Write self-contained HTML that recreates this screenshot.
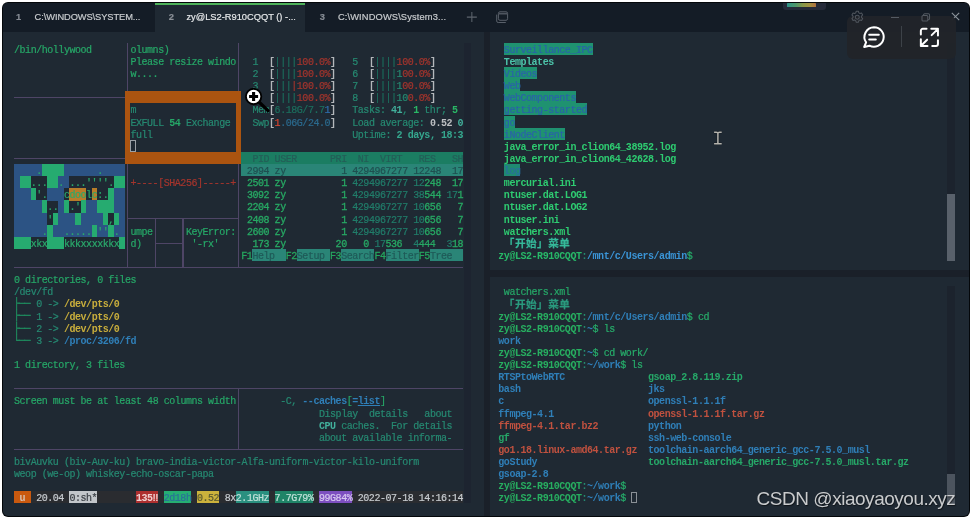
<!DOCTYPE html>
<html><head><meta charset="utf-8"><title>Terminal</title>
<style>
html,body{margin:0;padding:0;background:#fff;}
body{width:972px;height:520px;overflow:hidden;position:relative;}
#win{position:absolute;left:3px;top:3px;width:966px;height:513px;background:#1f2933;border-radius:5px;overflow:hidden;box-shadow:0 0 0 1px #04070a;}
#stage{position:absolute;left:-3px;top:-3px;width:972px;height:520px;filter:blur(0.45px);will-change:transform;}
.b{position:absolute;}
.t{-webkit-text-stroke:0.2px;position:absolute;font-family:"Liberation Mono","DejaVu Sans Mono",monospace;font-size:10.0px;line-height:12.125px;height:12.125px;letter-spacing:-0.455px;white-space:pre;}
.t.bx{font-family:"DejaVu Sans Mono","Liberation Mono",monospace;font-size:10.4px;letter-spacing:-0.716px;}
.t.dj{font-family:"Liberation Mono","DejaVu Sans Mono",monospace;}
.t.cj{font-family:"Liberation Mono","Noto Sans CJK SC",sans-serif;font-size:10.6px;letter-spacing:0.49px;font-weight:bold;}
.tab{position:absolute;top:2px;height:29.5px;font-family:"Liberation Sans",sans-serif;font-size:9.3px;line-height:30px;white-space:pre;}
.tab .n{position:absolute;font-weight:bold;color:#858b93;-webkit-text-stroke:0.2px;}
.tab .s{position:absolute;color:#c9cccf;-webkit-text-stroke:0.18px;}
</style></head><body>
<div id="win"><div id="stage">
<!-- title bar -->
<div class="b" style="left:0;top:0;width:972px;height:31.5px;background:#141c26"></div>
<div class="tab" style="left:2px;width:152.8px;"><span class="n" style="left:14px">1</span><span class="s" style="left:32.6px;letter-spacing:-0.085px">C:\WINDOWS\SYSTEM...</span></div>
<div class="tab" style="left:154.8px;width:150.4px;background:#1f2933;"><div class="b" style="left:0;top:0;width:150.4px;height:3.3px;background:#4eb25a"></div><span class="n" style="left:14px;color:#8b9198">2</span><span class="s" style="left:31.6px;color:#e6e8ea">zy@LS2-R910CQQT () -...</span></div>
<div class="tab" style="left:305.2px;width:150px;"><span class="n" style="left:14.5px">3</span><span class="s" style="left:32.7px;letter-spacing:0.14px">C:\WINDOWS\System3...</span></div>
<svg class="b" style="left:464px;top:9px" width="16" height="16" viewBox="0 0 16 16"><path d="M7.85 3.1v10M2.85 8.1h10" stroke="#5c636c" stroke-width="1.05" fill="none"/></svg>
<svg class="b" style="left:494px;top:9px" width="17" height="16" viewBox="0 0 17 16"><g fill="none" stroke="#59606a" stroke-width="1"><rect x="4.4" y="2.8" width="9.2" height="8.5" rx="1.6"/><path d="M4.6 4.700h8.800" stroke-width="1.600" stroke="#4e555f"/><path d="M2.700 5.600v6.400a1.500 1.500 0 0 0 1.500 1.500h7.600"/></g></svg>
<!-- top indicator -->
<div class="b" style="left:782.6px;top:0;width:43.6px;height:9.8px;background:#262b3a;border-radius:0 0 3px 3px"></div>
<div class="b" style="left:786.9px;top:3.2px;width:28.9px;height:3.6px;border-radius:0.5px;background:linear-gradient(90deg,#2fb8a4,#5cbc7c 30%,#a9bd4f 55%,#d0b544 78%,#e08842);opacity:.74"></div>
<!-- pane chrome -->
<div class="b" style="left:463.6px;top:42.8px;width:7.2px;height:460.3px;background:#1d2430"></div>
<div class="b" style="left:483.8px;top:31.5px;width:6.7px;height:486px;background:#1a2029"></div>
<div class="b" style="left:487px;top:270.2px;width:485px;height:7.2px;background:#1a2029"></div>
<div class="b" style="left:947px;top:43px;width:8px;height:218px;background:#1c232d"></div>
<div class="b" style="left:947.2px;top:194.3px;width:7.8px;height:66.7px;background:#59616b"></div>
<div class="b" style="left:947px;top:286px;width:8px;height:218.4px;background:#1c232d"></div>
<div class="b" style="left:947.2px;top:473.6px;width:7.8px;height:30.8px;background:#4c545e"></div>

<div class="b" style="left:14.00px;top:97.09px;width:110.90px;height:1.05px;background:#4e4566;"></div>
<div class="b" style="left:14.00px;top:157.71px;width:110.90px;height:1.05px;background:#4e4566;"></div>
<div class="b" style="left:14.00px;top:266.84px;width:449.14px;height:1.05px;background:#4e4566;"></div>
<div class="b" style="left:14.00px;top:388.09px;width:449.14px;height:1.05px;background:#4e4566;"></div>
<div class="b" style="left:14.00px;top:448.71px;width:449.14px;height:1.05px;background:#4e4566;"></div>
<div class="b" style="left:126.92px;top:42.75px;width:1.50px;height:48.50px;background:#4e4566;"></div>
<div class="b" style="left:237.82px;top:42.75px;width:1.50px;height:48.50px;background:#4e4566;"></div>
<div class="b" style="left:126.92px;top:164.00px;width:1.50px;height:103.06px;background:#4e4566;"></div>
<div class="b" style="left:237.82px;top:164.00px;width:1.50px;height:103.06px;background:#4e4566;"></div>
<div class="b" style="left:127.67px;top:218.34px;width:110.90px;height:1.05px;background:#4e4566;"></div>
<div class="b" style="left:154.65px;top:218.56px;width:1.50px;height:48.50px;background:#4e4566;"></div>
<div class="b" style="left:182.37px;top:218.56px;width:1.50px;height:48.50px;background:#4e4566;"></div>
<div class="b" style="left:155.40px;top:242.59px;width:27.73px;height:1.05px;background:#4e4566;"></div>
<div class="b" style="left:237.82px;top:388.31px;width:1.50px;height:60.62px;background:#4e4566;"></div>
<div class="b" style="left:124.90px;top:91.25px;width:116.44px;height:12.12px;background:#ab5410;"></div>
<div class="b" style="left:124.90px;top:151.88px;width:116.44px;height:12.12px;background:#ab5410;"></div>
<div class="b" style="left:124.90px;top:91.25px;width:5.54px;height:72.75px;background:#ab5410;"></div>
<div class="b" style="left:235.80px;top:91.25px;width:5.54px;height:72.75px;background:#ab5410;"></div>
<span class="t" style="left:14.00px;top:44.75px;color:#26a868;">/bin/hollywood</span>
<span class="t" style="left:130.44px;top:44.75px;color:#26a868;">olumns)</span>
<span class="t" style="left:130.44px;top:56.88px;color:#26a868;">Please resize windo</span>
<span class="t" style="left:130.44px;top:69.00px;color:#26a868;">w....</span>
<span class="t" style="left:130.44px;top:105.38px;color:#268a72;">m</span>
<span class="t" style="left:130.44px;top:117.50px;color:#268a72;">EXFULL </span>
<span class="t" style="left:169.26px;top:117.50px;color:#26a868;font-weight:bold;-webkit-text-stroke:0;">54</span>
<span class="t" style="left:180.35px;top:117.50px;color:#268a72;"> Exchange</span>
<span class="t" style="left:130.44px;top:129.62px;color:#268a72;">full</span>
<div class="b" style="left:130.75px;top:140.25px;width:3.54px;height:10.12px;border:1px solid #9aa0a6;box-sizing:content-box;margin:-0.5px"></div>
<div class="b" style="left:14.00px;top:164.00px;width:27.73px;height:12.28px;background:#2c5384;"></div>
<div class="b" style="left:41.73px;top:164.00px;width:22.18px;height:12.28px;background:#26ab70;"></div>
<div class="b" style="left:63.91px;top:164.00px;width:60.99px;height:12.28px;background:#2c5384;"></div>
<span class="t" style="left:36.18px;top:166.00px;color:#2aaa6c;">.</span>
<span class="t" style="left:97.17px;top:166.00px;color:#2aaa6c;">.</span>
<div class="b" style="left:14.00px;top:176.12px;width:5.54px;height:12.28px;background:#2c5384;"></div>
<div class="b" style="left:19.55px;top:176.12px;width:11.09px;height:12.28px;background:#26ab70;"></div>
<div class="b" style="left:47.27px;top:176.12px;width:11.09px;height:12.28px;background:#26ab70;"></div>
<div class="b" style="left:58.36px;top:176.12px;width:11.09px;height:12.28px;background:#2c5384;"></div>
<div class="b" style="left:113.81px;top:176.12px;width:11.09px;height:12.28px;background:#26ab70;"></div>
<span class="t" style="left:30.63px;top:178.12px;color:#2aaa6c;">...</span>
<span class="t" style="left:58.36px;top:178.12px;color:#2aaa6c;">.</span>
<span class="t" style="left:69.45px;top:178.12px;color:#2aaa6c;">...''''.</span>
<div class="b" style="left:14.00px;top:188.25px;width:16.63px;height:12.28px;background:#2c5384;"></div>
<div class="b" style="left:30.63px;top:188.25px;width:5.54px;height:12.28px;background:#26ab70;"></div>
<div class="b" style="left:47.27px;top:188.25px;width:16.63px;height:12.28px;background:#2c5384;"></div>
<div class="b" style="left:69.45px;top:188.25px;width:16.63px;height:12.28px;background:#b87c2a;"></div>
<div class="b" style="left:91.63px;top:188.25px;width:5.54px;height:12.28px;background:#b87c2a;"></div>
<div class="b" style="left:108.27px;top:188.25px;width:5.54px;height:12.28px;background:#26ab70;"></div>
<div class="b" style="left:113.81px;top:188.25px;width:11.09px;height:12.28px;background:#2c5384;"></div>
<span class="t" style="left:36.18px;top:190.25px;color:#2aaa6c;">'.</span>
<span class="t" style="left:63.91px;top:190.25px;color:#2aaa6c;">cdoolc:.</span>
<div class="b" style="left:14.00px;top:200.38px;width:27.73px;height:12.28px;background:#2c5384;"></div>
<div class="b" style="left:41.73px;top:200.38px;width:5.54px;height:12.28px;background:#26ab70;"></div>
<div class="b" style="left:58.36px;top:200.38px;width:5.54px;height:12.28px;background:#2c5384;"></div>
<div class="b" style="left:63.91px;top:200.38px;width:5.54px;height:12.28px;background:#26ab70;"></div>
<div class="b" style="left:80.54px;top:200.38px;width:5.54px;height:12.28px;background:#26ab70;"></div>
<div class="b" style="left:86.08px;top:200.38px;width:11.09px;height:12.28px;background:#2c5384;"></div>
<div class="b" style="left:97.17px;top:200.38px;width:16.63px;height:12.28px;background:#26ab70;"></div>
<div class="b" style="left:113.81px;top:200.38px;width:11.09px;height:12.28px;background:#2c5384;"></div>
<span class="t" style="left:47.27px;top:202.38px;color:#2aaa6c;">..</span>
<span class="t" style="left:69.45px;top:202.38px;color:#2aaa6c;">.'</span>
<div class="b" style="left:14.00px;top:212.50px;width:33.27px;height:12.28px;background:#2c5384;"></div>
<div class="b" style="left:52.81px;top:212.50px;width:5.54px;height:12.28px;background:#26ab70;"></div>
<div class="b" style="left:58.36px;top:212.50px;width:16.63px;height:12.28px;background:#2c5384;"></div>
<div class="b" style="left:75.00px;top:212.50px;width:5.54px;height:12.28px;background:#26ab70;"></div>
<div class="b" style="left:80.54px;top:212.50px;width:22.18px;height:12.28px;background:#2c5384;"></div>
<div class="b" style="left:102.72px;top:212.50px;width:5.54px;height:12.28px;background:#26ab70;"></div>
<div class="b" style="left:113.81px;top:212.50px;width:5.54px;height:12.28px;background:#26ab70;"></div>
<div class="b" style="left:119.36px;top:212.50px;width:5.54px;height:12.28px;background:#2c5384;"></div>
<span class="t" style="left:47.27px;top:214.50px;color:#2aaa6c;">'</span>
<span class="t" style="left:108.27px;top:214.50px;color:#2aaa6c;">,</span>
<div class="b" style="left:14.00px;top:224.62px;width:33.27px;height:12.28px;background:#2c5384;"></div>
<div class="b" style="left:47.27px;top:224.62px;width:5.54px;height:12.28px;background:#26ab70;"></div>
<div class="b" style="left:52.81px;top:224.62px;width:38.81px;height:12.28px;background:#2c5384;"></div>
<div class="b" style="left:91.63px;top:224.62px;width:5.54px;height:12.28px;background:#26ab70;"></div>
<div class="b" style="left:97.17px;top:224.62px;width:11.09px;height:12.28px;background:#2c5384;"></div>
<div class="b" style="left:108.27px;top:224.62px;width:5.54px;height:12.28px;background:#26ab70;"></div>
<div class="b" style="left:113.81px;top:224.62px;width:11.09px;height:12.28px;background:#2c5384;"></div>
<span class="t" style="left:41.73px;top:226.62px;color:#2aaa6c;">.</span>
<span class="t" style="left:63.91px;top:226.62px;color:#2aaa6c;">.....</span>
<span class="t" style="left:97.17px;top:226.62px;color:#2aaa6c;">''</span>
<span class="t" style="left:113.81px;top:226.62px;color:#2aaa6c;">.</span>
<div class="b" style="left:14.00px;top:236.75px;width:16.63px;height:12.28px;background:#26ab70;"></div>
<div class="b" style="left:47.27px;top:236.75px;width:16.63px;height:12.28px;background:#26ab70;"></div>
<div class="b" style="left:119.36px;top:236.75px;width:5.54px;height:12.28px;background:#26ab70;"></div>
<span class="t" style="left:30.63px;top:238.75px;color:#2aaa6c;">xkx</span>
<span class="t" style="left:63.91px;top:238.75px;color:#2aaa6c;">kkkxxxxkkx</span>
<span class="t" style="left:130.44px;top:178.12px;color:#a5352d;">+----[SHA256]-----+</span>
<span class="t" style="left:130.44px;top:226.62px;color:#26a868;">umpe</span>
<span class="t" style="left:130.44px;top:238.75px;color:#26a868;">d)</span>
<span class="t" style="left:185.90px;top:226.62px;color:#26a868;">KeyError:</span>
<span class="t" style="left:185.90px;top:238.75px;color:#26a868;"> '-rx'</span>
<span class="t" style="left:252.44px;top:56.88px;color:#268a72;">1</span>
<span class="t" style="left:269.07px;top:56.88px;color:#b4b8bc;font-weight:bold;-webkit-text-stroke:0;">[</span>
<span class="t" style="left:274.62px;top:56.88px;color:#1c6f5e;">||||</span>
<span class="t" style="left:296.80px;top:56.88px;color:#a5352d;">100.0%</span>
<span class="t" style="left:330.06px;top:56.88px;color:#b4b8bc;font-weight:bold;-webkit-text-stroke:0;">]</span>
<span class="t" style="left:252.44px;top:69.00px;color:#268a72;">2</span>
<span class="t" style="left:269.07px;top:69.00px;color:#b4b8bc;font-weight:bold;-webkit-text-stroke:0;">[</span>
<span class="t" style="left:274.62px;top:69.00px;color:#1c6f5e;">||||</span>
<span class="t" style="left:296.80px;top:69.00px;color:#a5352d;">100.0%</span>
<span class="t" style="left:330.06px;top:69.00px;color:#b4b8bc;font-weight:bold;-webkit-text-stroke:0;">]</span>
<span class="t" style="left:252.44px;top:81.12px;color:#268a72;">3</span>
<span class="t" style="left:269.07px;top:81.12px;color:#b4b8bc;font-weight:bold;-webkit-text-stroke:0;">[</span>
<span class="t" style="left:274.62px;top:81.12px;color:#1c6f5e;">|||</span>
<span class="t" style="left:291.25px;top:81.12px;color:#a5352d;">|</span>
<span class="t" style="left:296.80px;top:81.12px;color:#a5352d;">100.0%</span>
<span class="t" style="left:330.06px;top:81.12px;color:#b4b8bc;font-weight:bold;-webkit-text-stroke:0;">]</span>
<span class="t" style="left:252.44px;top:93.25px;color:#268a72;">4</span>
<span class="t" style="left:269.07px;top:93.25px;color:#b4b8bc;font-weight:bold;-webkit-text-stroke:0;">[</span>
<span class="t" style="left:274.62px;top:93.25px;color:#1c6f5e;">||||</span>
<span class="t" style="left:296.80px;top:93.25px;color:#a5352d;">100.0%</span>
<span class="t" style="left:330.06px;top:93.25px;color:#b4b8bc;font-weight:bold;-webkit-text-stroke:0;">]</span>
<span class="t" style="left:352.25px;top:56.88px;color:#268a72;">5</span>
<span class="t" style="left:368.88px;top:56.88px;color:#b4b8bc;font-weight:bold;-webkit-text-stroke:0;">[</span>
<span class="t" style="left:374.43px;top:56.88px;color:#1c6f5e;">||||</span>
<span class="t" style="left:396.61px;top:56.88px;color:#a5352d;">100.0%</span>
<span class="t" style="left:429.88px;top:56.88px;color:#b4b8bc;font-weight:bold;-webkit-text-stroke:0;">]</span>
<span class="t" style="left:352.25px;top:69.00px;color:#268a72;">6</span>
<span class="t" style="left:368.88px;top:69.00px;color:#b4b8bc;font-weight:bold;-webkit-text-stroke:0;">[</span>
<span class="t" style="left:374.43px;top:69.00px;color:#1c6f5e;">||||</span>
<span class="t" style="left:396.61px;top:69.00px;color:#268a72;">1</span>
<span class="t" style="left:402.15px;top:69.00px;color:#a5352d;">00.0%</span>
<span class="t" style="left:429.88px;top:69.00px;color:#b4b8bc;font-weight:bold;-webkit-text-stroke:0;">]</span>
<span class="t" style="left:352.25px;top:81.12px;color:#268a72;">7</span>
<span class="t" style="left:368.88px;top:81.12px;color:#b4b8bc;font-weight:bold;-webkit-text-stroke:0;">[</span>
<span class="t" style="left:374.43px;top:81.12px;color:#1c6f5e;">||||</span>
<span class="t" style="left:396.61px;top:81.12px;color:#268a72;">1</span>
<span class="t" style="left:402.15px;top:81.12px;color:#a5352d;">00.0%</span>
<span class="t" style="left:429.88px;top:81.12px;color:#b4b8bc;font-weight:bold;-webkit-text-stroke:0;">]</span>
<span class="t" style="left:352.25px;top:93.25px;color:#268a72;">8</span>
<span class="t" style="left:368.88px;top:93.25px;color:#b4b8bc;font-weight:bold;-webkit-text-stroke:0;">[</span>
<span class="t" style="left:374.43px;top:93.25px;color:#1c6f5e;">||||</span>
<span class="t" style="left:396.61px;top:93.25px;color:#268a72;">10</span>
<span class="t" style="left:407.69px;top:93.25px;color:#a5352d;">0.0%</span>
<span class="t" style="left:429.88px;top:93.25px;color:#b4b8bc;font-weight:bold;-webkit-text-stroke:0;">]</span>
<span class="t" style="left:252.44px;top:105.38px;color:#268a72;">Mem</span>
<span class="t" style="left:269.07px;top:105.38px;color:#b4b8bc;font-weight:bold;-webkit-text-stroke:0;">[</span>
<span class="t" style="left:274.62px;top:105.38px;color:#1c6f5e;">6.18G/7.7</span>
<span class="t" style="left:324.52px;top:105.38px;color:#2f6fae;">1</span>
<span class="t" style="left:330.06px;top:105.38px;color:#b4b8bc;font-weight:bold;-webkit-text-stroke:0;">]</span>
<span class="t" style="left:252.44px;top:117.50px;color:#268a72;">Swp</span>
<span class="t" style="left:269.07px;top:117.50px;color:#b4b8bc;font-weight:bold;-webkit-text-stroke:0;">[</span>
<span class="t" style="left:274.62px;top:117.50px;color:#d9442f;">1</span>
<span class="t" style="left:280.16px;top:117.50px;color:#2b6a8e;">.06G/24.0</span>
<span class="t" style="left:330.06px;top:117.50px;color:#b4b8bc;font-weight:bold;-webkit-text-stroke:0;">]</span>
<span class="t" style="left:352.25px;top:105.38px;color:#268a72;">Tasks: </span>
<span class="t" style="left:391.06px;top:105.38px;color:#42b09c;font-weight:bold;-webkit-text-stroke:0;">41</span>
<span class="t" style="left:402.15px;top:105.38px;color:#268a72;">, </span>
<span class="t" style="left:413.24px;top:105.38px;color:#29b765;font-weight:bold;-webkit-text-stroke:0;">1</span>
<span class="t" style="left:418.78px;top:105.38px;color:#268a72;"> thr; </span>
<span class="t" style="left:452.06px;top:105.38px;color:#29b765;font-weight:bold;-webkit-text-stroke:0;">5</span>
<span class="t" style="left:352.25px;top:117.50px;color:#268a72;">Load average: </span>
<span class="t" style="left:429.88px;top:117.50px;color:#bcbfc2;font-weight:bold;-webkit-text-stroke:0;">0.52</span>
<span class="t" style="left:452.06px;top:117.50px;color:#42b09c;font-weight:bold;-webkit-text-stroke:0;"> 0</span>
<span class="t" style="left:352.25px;top:129.62px;color:#268a72;">Uptime: </span>
<span class="t" style="left:396.61px;top:129.62px;color:#35a78e;font-weight:bold;-webkit-text-stroke:0;">2 days, 18:3</span>
<div class="b" style="left:241.34px;top:151.88px;width:221.80px;height:12.12px;background:#1b7d62;"></div>
<span class="t" style="left:241.34px;top:153.88px;color:#245e58;">  PID USER      PRI  NI  VIRT   RES   SH</span>
<div class="b" style="left:241.34px;top:164.00px;width:221.80px;height:12.12px;background:#2a8577;"></div>
<span class="t" style="left:241.34px;top:166.00px;color:#1f4f50;"> 2994 zy          1 4294967277 12248  17</span>
<span class="t" style="left:246.89px;top:178.12px;color:#27a964;-webkit-text-stroke:0.3px;">2501</span>
<span class="t" style="left:274.62px;top:178.12px;color:#27a964;-webkit-text-stroke:0.3px;">zy</span>
<span class="t" style="left:341.15px;top:178.12px;color:#27a964;-webkit-text-stroke:0.3px;">1</span>
<span class="t" style="left:352.25px;top:178.12px;color:#217d6a;">4294967277</span>
<span class="t" style="left:413.24px;top:178.12px;color:#217d6a;">12</span>
<span class="t" style="left:424.33px;top:178.12px;color:#27a964;-webkit-text-stroke:0.3px;">248</span>
<span class="t" style="left:452.06px;top:178.12px;color:#27a964;-webkit-text-stroke:0.3px;">17</span>
<span class="t" style="left:246.89px;top:190.25px;color:#27a964;-webkit-text-stroke:0.3px;">3092</span>
<span class="t" style="left:274.62px;top:190.25px;color:#27a964;-webkit-text-stroke:0.3px;">zy</span>
<span class="t" style="left:341.15px;top:190.25px;color:#27a964;-webkit-text-stroke:0.3px;">1</span>
<span class="t" style="left:352.25px;top:190.25px;color:#217d6a;">4294967277</span>
<span class="t" style="left:413.24px;top:190.25px;color:#217d6a;">38</span>
<span class="t" style="left:424.33px;top:190.25px;color:#27a964;-webkit-text-stroke:0.3px;">544</span>
<span class="t" style="left:446.51px;top:190.25px;color:#217d6a;">17</span>
<span class="t" style="left:457.60px;top:190.25px;color:#27a964;-webkit-text-stroke:0.3px;">1</span>
<span class="t" style="left:246.89px;top:202.38px;color:#27a964;-webkit-text-stroke:0.3px;">2204</span>
<span class="t" style="left:274.62px;top:202.38px;color:#27a964;-webkit-text-stroke:0.3px;">zy</span>
<span class="t" style="left:341.15px;top:202.38px;color:#27a964;-webkit-text-stroke:0.3px;">1</span>
<span class="t" style="left:352.25px;top:202.38px;color:#217d6a;">4294967277</span>
<span class="t" style="left:413.24px;top:202.38px;color:#217d6a;">10</span>
<span class="t" style="left:424.33px;top:202.38px;color:#27a964;-webkit-text-stroke:0.3px;">656</span>
<span class="t" style="left:457.60px;top:202.38px;color:#27a964;-webkit-text-stroke:0.3px;">7</span>
<span class="t" style="left:246.89px;top:214.50px;color:#27a964;-webkit-text-stroke:0.3px;">2408</span>
<span class="t" style="left:274.62px;top:214.50px;color:#27a964;-webkit-text-stroke:0.3px;">zy</span>
<span class="t" style="left:341.15px;top:214.50px;color:#27a964;-webkit-text-stroke:0.3px;">1</span>
<span class="t" style="left:352.25px;top:214.50px;color:#217d6a;">4294967277</span>
<span class="t" style="left:413.24px;top:214.50px;color:#217d6a;">10</span>
<span class="t" style="left:424.33px;top:214.50px;color:#27a964;-webkit-text-stroke:0.3px;">656</span>
<span class="t" style="left:457.60px;top:214.50px;color:#27a964;-webkit-text-stroke:0.3px;">7</span>
<span class="t" style="left:246.89px;top:226.62px;color:#27a964;-webkit-text-stroke:0.3px;">2600</span>
<span class="t" style="left:274.62px;top:226.62px;color:#27a964;-webkit-text-stroke:0.3px;">zy</span>
<span class="t" style="left:341.15px;top:226.62px;color:#27a964;-webkit-text-stroke:0.3px;">1</span>
<span class="t" style="left:352.25px;top:226.62px;color:#217d6a;">4294967277</span>
<span class="t" style="left:413.24px;top:226.62px;color:#217d6a;">10</span>
<span class="t" style="left:424.33px;top:226.62px;color:#27a964;-webkit-text-stroke:0.3px;">656</span>
<span class="t" style="left:457.60px;top:226.62px;color:#27a964;-webkit-text-stroke:0.3px;">7</span>
<span class="t" style="left:252.44px;top:238.75px;color:#27a964;-webkit-text-stroke:0.3px;">173</span>
<span class="t" style="left:274.62px;top:238.75px;color:#27a964;-webkit-text-stroke:0.3px;">zy</span>
<span class="t" style="left:335.61px;top:238.75px;color:#27a964;-webkit-text-stroke:0.3px;">20</span>
<span class="t" style="left:363.33px;top:238.75px;color:#27a964;-webkit-text-stroke:0.3px;">0</span>
<span class="t" style="left:374.43px;top:238.75px;color:#217d6a;">17</span>
<span class="t" style="left:385.51px;top:238.75px;color:#27a964;-webkit-text-stroke:0.3px;">536</span>
<span class="t" style="left:413.24px;top:238.75px;color:#217d6a;">4</span>
<span class="t" style="left:418.78px;top:238.75px;color:#27a964;">444</span>
<span class="t" style="left:446.51px;top:238.75px;color:#217d6a;">3</span>
<span class="t" style="left:452.06px;top:238.75px;color:#27a964;-webkit-text-stroke:0.3px;">18</span>
<span class="t" style="left:241.34px;top:250.88px;color:#25a55e;-webkit-text-stroke:0.3px;">F1</span>
<div class="b" style="left:252.44px;top:248.88px;width:33.27px;height:12.12px;background:#2a8577;"></div>
<span class="t" style="left:252.44px;top:250.88px;color:#1f5a58;">Help  </span>
<span class="t" style="left:285.70px;top:250.88px;color:#25a55e;-webkit-text-stroke:0.3px;">F2</span>
<div class="b" style="left:296.80px;top:248.88px;width:33.27px;height:12.12px;background:#2a8577;"></div>
<span class="t" style="left:296.80px;top:250.88px;color:#1f5a58;">Setup </span>
<span class="t" style="left:330.06px;top:250.88px;color:#25a55e;-webkit-text-stroke:0.3px;">F3</span>
<div class="b" style="left:341.15px;top:248.88px;width:33.27px;height:12.12px;background:#2a8577;"></div>
<span class="t" style="left:341.15px;top:250.88px;color:#1f5a58;">Search</span>
<span class="t" style="left:374.43px;top:250.88px;color:#25a55e;-webkit-text-stroke:0.3px;">F4</span>
<div class="b" style="left:385.51px;top:248.88px;width:33.27px;height:12.12px;background:#2a8577;"></div>
<span class="t" style="left:385.51px;top:250.88px;color:#1f5a58;">Filter</span>
<span class="t" style="left:418.78px;top:250.88px;color:#25a55e;-webkit-text-stroke:0.3px;">F5</span>
<div class="b" style="left:429.88px;top:248.88px;width:33.27px;height:12.12px;background:#2a8577;"></div>
<span class="t" style="left:429.88px;top:250.88px;color:#1f5a58;">Tree  </span>
<span class="t" style="left:14.00px;top:275.12px;color:#26a868;">0 directories, 0 files</span>
<span class="t" style="left:14.00px;top:287.25px;color:#268a72;">/dev/fd</span>
<span class="t bx" style="left:14.00px;top:299.38px;color:#1f8a5e;margin:-2.1px 0 0 -0.8px;-webkit-text-stroke:0.3px;">├── </span>
<span class="t" style="left:36.18px;top:299.38px;color:#268a72;">0 -&gt; </span>
<span class="t" style="left:63.91px;top:299.38px;color:#c9ae3c;font-weight:bold;-webkit-text-stroke:0;">/dev/pts/0</span>
<span class="t bx" style="left:14.00px;top:311.50px;color:#1f8a5e;margin:-2.1px 0 0 -0.8px;-webkit-text-stroke:0.3px;">├── </span>
<span class="t" style="left:36.18px;top:311.50px;color:#268a72;">1 -&gt; </span>
<span class="t" style="left:63.91px;top:311.50px;color:#c9ae3c;font-weight:bold;-webkit-text-stroke:0;">/dev/pts/0</span>
<span class="t bx" style="left:14.00px;top:323.62px;color:#1f8a5e;margin:-2.1px 0 0 -0.8px;-webkit-text-stroke:0.3px;">├── </span>
<span class="t" style="left:36.18px;top:323.62px;color:#268a72;">2 -&gt; </span>
<span class="t" style="left:63.91px;top:323.62px;color:#c9ae3c;font-weight:bold;-webkit-text-stroke:0;">/dev/pts/0</span>
<span class="t bx" style="left:14.00px;top:335.75px;color:#1f8a5e;margin:-2.1px 0 0 -0.8px;-webkit-text-stroke:0.3px;">└── </span>
<span class="t" style="left:36.18px;top:335.75px;color:#268a72;">3 -&gt; </span>
<span class="t" style="left:63.91px;top:335.75px;color:#2f7fb8;font-weight:bold;-webkit-text-stroke:0;">/proc/3206/fd</span>
<span class="t" style="left:14.00px;top:360.00px;color:#26a868;">1 directory, 3 files</span>
<span class="t" style="left:14.00px;top:396.38px;color:#26a868;">Screen must be at least 48 columns width</span>
<span class="t" style="left:280.16px;top:396.38px;color:#268a72;">-C, </span>
<span class="t" style="left:302.34px;top:396.38px;color:#2f7fb8;font-weight:bold;-webkit-text-stroke:0;">--caches</span>
<span class="t" style="left:346.70px;top:396.38px;color:#26a868;">[</span>
<span class="t" style="left:352.25px;top:396.38px;color:#2f7fb8;font-weight:bold;-webkit-text-stroke:0;">=</span>
<span class="t" style="left:357.79px;top:396.38px;color:#2f7fb8;font-weight:bold;-webkit-text-stroke:0;text-decoration:underline;">list</span>
<span class="t" style="left:379.97px;top:396.38px;color:#26a868;">]</span>
<span class="t" style="left:318.98px;top:408.50px;color:#268a72;">Display  details   about</span>
<span class="t" style="left:318.98px;top:420.62px;color:#42b09c;font-weight:bold;-webkit-text-stroke:0;">CPU</span>
<span class="t" style="left:335.61px;top:420.62px;color:#268a72;"> caches.  For details</span>
<span class="t" style="left:318.98px;top:432.75px;color:#268a72;">about available informa-</span>
<span class="t" style="left:14.00px;top:457.00px;color:#268a72;">bivAuvku (biv-Auv-ku) bravo-india-victor-Alfa-uniform-victor-kilo-uniform</span>
<span class="t" style="left:14.00px;top:469.12px;color:#268a72;">weop (we-op) whiskey-echo-oscar-papa</span>
<div class="b" style="left:14.00px;top:491.38px;width:449.14px;height:12.12px;background:#2a2c30;"></div>
<div class="b" style="left:14.00px;top:491.38px;width:16.63px;height:12.12px;background:#c9590f;"></div>
<span class="t" style="left:14.00px;top:493.38px;color:#d6bfae;font-weight:bold;-webkit-text-stroke:0;"> u </span>
<span class="t" style="left:36.18px;top:493.38px;color:#c8ccd0;">20.04</span>
<div class="b" style="left:69.45px;top:491.38px;width:27.73px;height:12.12px;background:#c2c6ca;"></div>
<span class="t" style="left:69.45px;top:493.38px;color:#3a3f45;">0:sh*</span>
<div class="b" style="left:135.99px;top:491.38px;width:22.18px;height:12.12px;background:#ad2f2f;"></div>
<span class="t dj" style="left:135.99px;top:493.38px;color:#f0d0d0;font-weight:bold;-webkit-text-stroke:0;">135‼</span>
<div class="b" style="left:163.72px;top:491.38px;width:27.73px;height:12.12px;background:#25ae73;"></div>
<span class="t" style="left:163.72px;top:493.38px;color:#2b6f9a;">2d18h</span>
<div class="b" style="left:196.98px;top:491.38px;width:22.18px;height:12.12px;background:#cbb23c;"></div>
<span class="t" style="left:196.98px;top:493.38px;color:#5a5a30;">0.52</span>
<span class="t" style="left:224.71px;top:493.38px;color:#c8ccd0;">8x</span>
<div class="b" style="left:235.80px;top:491.38px;width:33.27px;height:12.12px;background:#2a9080;"></div>
<span class="t" style="left:235.80px;top:493.38px;color:#bfe0d8;">2.1GHz</span>
<div class="b" style="left:274.62px;top:491.38px;width:38.81px;height:12.12px;background:#1f8467;"></div>
<span class="t" style="left:274.62px;top:493.38px;color:#bfe0d8;">7.7G79%</span>
<div class="b" style="left:318.98px;top:491.38px;width:33.27px;height:12.12px;background:#7d4fc0;"></div>
<span class="t" style="left:318.98px;top:493.38px;color:#d8c8f0;">99G84%</span>
<span class="t" style="left:357.79px;top:493.38px;color:#c8ccd0;">2022-07-18 14:16:14</span>
<div class="b" style="left:503.85px;top:42.75px;width:88.72px;height:12.12px;background:#1f9270;"></div>
<span class="t" style="left:503.85px;top:44.75px;color:#2a63a8;">Surveillance_IPC</span>
<span class="t" style="left:503.85px;top:56.88px;color:#4cc4aa;font-weight:bold;-webkit-text-stroke:0;">Templates</span>
<div class="b" style="left:503.85px;top:67.00px;width:33.27px;height:12.12px;background:#1f9270;"></div>
<span class="t" style="left:503.85px;top:69.00px;color:#2a63a8;">Videos</span>
<div class="b" style="left:503.85px;top:79.12px;width:16.63px;height:12.12px;background:#1f9270;"></div>
<span class="t" style="left:503.85px;top:81.12px;color:#2a63a8;">Web</span>
<div class="b" style="left:503.85px;top:91.25px;width:72.08px;height:12.12px;background:#1f9270;"></div>
<span class="t" style="left:503.85px;top:93.25px;color:#2a63a8;">WebComponents</span>
<div class="b" style="left:503.85px;top:103.38px;width:83.17px;height:12.12px;background:#1f9270;"></div>
<span class="t" style="left:503.85px;top:105.38px;color:#2a63a8;">getting-started</span>
<div class="b" style="left:503.85px;top:115.50px;width:11.09px;height:12.12px;background:#1f9270;"></div>
<span class="t" style="left:503.85px;top:117.50px;color:#2a63a8;">go</span>
<div class="b" style="left:503.85px;top:127.62px;width:60.99px;height:12.12px;background:#1f9270;"></div>
<span class="t" style="left:503.85px;top:129.62px;color:#2a63a8;">iNodeClient</span>
<span class="t" style="left:503.85px;top:141.75px;color:#2ecc71;font-weight:bold;-webkit-text-stroke:0;">java_error_in_clion64_38952.log</span>
<span class="t" style="left:503.85px;top:153.88px;color:#2ecc71;font-weight:bold;-webkit-text-stroke:0;">java_error_in_clion64_42628.log</span>
<div class="b" style="left:503.85px;top:164.00px;width:16.63px;height:12.12px;background:#1f8a72;"></div>
<span class="t" style="left:503.85px;top:166.00px;color:#2a6e9e;">log</span>
<span class="t" style="left:503.85px;top:178.12px;color:#2ecc71;font-weight:bold;-webkit-text-stroke:0;">mercurial.ini</span>
<span class="t" style="left:503.85px;top:190.25px;color:#2ecc71;font-weight:bold;-webkit-text-stroke:0;">ntuser.dat.LOG1</span>
<span class="t" style="left:503.85px;top:202.38px;color:#2ecc71;font-weight:bold;-webkit-text-stroke:0;">ntuser.dat.LOG2</span>
<span class="t" style="left:503.85px;top:214.50px;color:#2ecc71;font-weight:bold;-webkit-text-stroke:0;">ntuser.ini</span>
<span class="t" style="left:503.85px;top:226.62px;color:#2ecc71;font-weight:bold;-webkit-text-stroke:0;">watchers.xml</span>
<span class="t cj" style="left:503.85px;top:238.15px;color:#35b99a;">「开始」菜单</span>
<span class="t" style="left:498.30px;top:250.88px;color:#27b868;font-weight:bold;-webkit-text-stroke:0;">zy@LS2-R910CQQT</span>
<span class="t" style="left:581.48px;top:250.88px;color:#268a72;">:</span>
<span class="t" style="left:587.02px;top:250.88px;color:#3a94d6;font-weight:bold;-webkit-text-stroke:0;">/mnt/c/Users/admin</span>
<span class="t" style="left:686.83px;top:250.88px;color:#27ae6b;">$</span>
<span class="t" style="left:503.85px;top:287.25px;color:#26a868;">watchers.xml</span>
<span class="t cj" style="left:503.85px;top:298.77px;color:#2a9a7e;">「开始」菜单</span>
<span class="t" style="left:498.30px;top:311.50px;color:#27ae60;font-weight:bold;-webkit-text-stroke:0;">zy@LS2-R910CQQT</span>
<span class="t" style="left:581.48px;top:311.50px;color:#268a72;">:</span>
<span class="t" style="left:587.02px;top:311.50px;color:#2f7fb8;font-weight:bold;-webkit-text-stroke:0;">/mnt/c/Users/admin</span>
<span class="t" style="left:686.83px;top:311.50px;color:#27ae6b;">$ cd</span>
<span class="t" style="left:498.30px;top:323.62px;color:#27ae60;font-weight:bold;-webkit-text-stroke:0;">zy@LS2-R910CQQT</span>
<span class="t" style="left:581.48px;top:323.62px;color:#268a72;">:</span>
<span class="t" style="left:587.02px;top:323.62px;color:#2f7fb8;font-weight:bold;-webkit-text-stroke:0;">~</span>
<span class="t" style="left:592.57px;top:323.62px;color:#27ae6b;">$ ls</span>
<span class="t" style="left:498.30px;top:335.75px;color:#2f7fb8;font-weight:bold;-webkit-text-stroke:0;">work</span>
<span class="t" style="left:498.30px;top:347.88px;color:#27ae60;font-weight:bold;-webkit-text-stroke:0;">zy@LS2-R910CQQT</span>
<span class="t" style="left:581.48px;top:347.88px;color:#268a72;">:</span>
<span class="t" style="left:587.02px;top:347.88px;color:#2f7fb8;font-weight:bold;-webkit-text-stroke:0;">~</span>
<span class="t" style="left:592.57px;top:347.88px;color:#27ae6b;">$ cd work/</span>
<span class="t" style="left:498.30px;top:360.00px;color:#27ae60;font-weight:bold;-webkit-text-stroke:0;">zy@LS2-R910CQQT</span>
<span class="t" style="left:581.48px;top:360.00px;color:#268a72;">:</span>
<span class="t" style="left:587.02px;top:360.00px;color:#2f7fb8;font-weight:bold;-webkit-text-stroke:0;">~/work</span>
<span class="t" style="left:620.29px;top:360.00px;color:#27ae6b;">$ ls</span>
<span class="t" style="left:498.30px;top:372.12px;color:#2f7fb8;font-weight:bold;-webkit-text-stroke:0;">RTSPtoWebRTC</span>
<span class="t" style="left:648.01px;top:372.12px;color:#26a868;font-weight:bold;-webkit-text-stroke:0;">gsoap_2.8.119.zip</span>
<span class="t" style="left:498.30px;top:384.25px;color:#2f7fb8;font-weight:bold;-webkit-text-stroke:0;">bash</span>
<span class="t" style="left:648.01px;top:384.25px;color:#2f7fb8;font-weight:bold;-webkit-text-stroke:0;">jks</span>
<span class="t" style="left:498.30px;top:396.38px;color:#2f7fb8;font-weight:bold;-webkit-text-stroke:0;">c</span>
<span class="t" style="left:648.01px;top:396.38px;color:#2f7fb8;font-weight:bold;-webkit-text-stroke:0;">openssl-1.1.1f</span>
<span class="t" style="left:498.30px;top:408.50px;color:#2f7fb8;font-weight:bold;-webkit-text-stroke:0;">ffmpeg-4.1</span>
<span class="t" style="left:648.01px;top:408.50px;color:#c0513f;font-weight:bold;-webkit-text-stroke:0;">openssl-1.1.1f.tar.gz</span>
<span class="t" style="left:498.30px;top:420.62px;color:#c0513f;font-weight:bold;-webkit-text-stroke:0;">ffmpeg-4.1.tar.bz2</span>
<span class="t" style="left:648.01px;top:420.62px;color:#2f7fb8;font-weight:bold;-webkit-text-stroke:0;">python</span>
<span class="t" style="left:498.30px;top:432.75px;color:#26a868;font-weight:bold;-webkit-text-stroke:0;">gf</span>
<span class="t" style="left:648.01px;top:432.75px;color:#2f7fb8;font-weight:bold;-webkit-text-stroke:0;">ssh-web-console</span>
<span class="t" style="left:498.30px;top:444.88px;color:#c0513f;font-weight:bold;-webkit-text-stroke:0;">go1.18.linux-amd64.tar.gz</span>
<span class="t" style="left:648.01px;top:444.88px;color:#2f7fb8;font-weight:bold;-webkit-text-stroke:0;">toolchain-aarch64_generic_gcc-7.5.0_musl</span>
<span class="t" style="left:498.30px;top:457.00px;color:#2f7fb8;font-weight:bold;-webkit-text-stroke:0;">goStudy</span>
<span class="t" style="left:648.01px;top:457.00px;color:#26a868;font-weight:bold;-webkit-text-stroke:0;">toolchain-aarch64_generic_gcc-7.5.0_musl.tar.gz</span>
<span class="t" style="left:498.30px;top:469.12px;color:#2f7fb8;font-weight:bold;-webkit-text-stroke:0;">gsoap-2.8</span>
<span class="t" style="left:498.30px;top:481.25px;color:#27ae60;font-weight:bold;-webkit-text-stroke:0;">zy@LS2-R910CQQT</span>
<span class="t" style="left:581.48px;top:481.25px;color:#268a72;">:</span>
<span class="t" style="left:587.02px;top:481.25px;color:#2f7fb8;font-weight:bold;-webkit-text-stroke:0;">~/work</span>
<span class="t" style="left:620.29px;top:481.25px;color:#27ae6b;">$</span>
<span class="t" style="left:498.30px;top:493.38px;color:#27ae60;font-weight:bold;-webkit-text-stroke:0;">zy@LS2-R910CQQT</span>
<span class="t" style="left:581.48px;top:493.38px;color:#268a72;">:</span>
<span class="t" style="left:587.02px;top:493.38px;color:#2f7fb8;font-weight:bold;-webkit-text-stroke:0;">~/work</span>
<span class="t" style="left:620.29px;top:493.38px;color:#27ae6b;">$</span>
<div class="b" style="left:631.88px;top:492.18px;width:3.94px;height:9.53px;border:1px solid #8a9096;box-sizing:content-box;margin:-0.5px"></div>

<!-- mouse cursors -->
<svg class="b" style="left:240px;top:84px" width="34" height="32" viewBox="0 0 34 32"><path d="M19 18l9 8.6" stroke="#000" stroke-width="3.2" stroke-linecap="round"/><circle cx="13.6" cy="12.5" r="7.7" fill="#fff" stroke="#000" stroke-width="1.9"/><path d="M13.6 8v9M9.1 12.5h9" stroke="#000" stroke-width="3.1"/></svg>
<svg class="b" style="left:711px;top:129px" width="14" height="18" viewBox="0 0 14 18"><path d="M3.100 3.200h2.200q1.600 0 1.600 1.100v9.400q0 1.100-1.600 1.100H3.100M10.700 3.200H8.500q-1.600 0-1.600 1.100M10.700 14.800H8.500q-1.600 0-1.600-1.100" fill="none" stroke="#0e1319" stroke-opacity=".6" stroke-width="2.600"/><path d="M3.100 3.200h2.200q1.600 0 1.600 1.100v9.400q0 1.100-1.600 1.100H3.100M10.700 3.200H8.500q-1.600 0-1.600 1.100M10.700 14.800H8.500q-1.600 0-1.600-1.100" fill="none" stroke="#b4b3ad" stroke-width="1.500"/></svg>

<!-- floating toolbar -->
<svg class="b" style="left:948.15px;top:9.2px" width="15" height="15" viewBox="0 0 15 15"><path d="M3.8 3.8l7.4 7.4M11.2 3.8l-7.4 7.4" stroke="#8d949b" stroke-width="1.1" fill="none"/></svg>
<div class="b" style="left:846.9px;top:16px;width:109.2px;height:42.6px;background:rgba(33,36,41,0.97);border-radius:6px"></div>
<div class="b" style="left:901px;top:26px;width:1px;height:21px;background:#3d4248"></div>
<svg class="b" style="left:861.3px;top:23.6px" width="26" height="26" viewBox="0 0 26 26"><path d="M13 3.2a9.8 9.8 0 1 1-4.6 18.5L3.2 23l1.9-4.6A9.8 9.8 0 0 1 13 3.2z" fill="none" stroke="#fff" stroke-width="2" stroke-linejoin="round"/><path d="M8.2 10.7h9.6M8.2 15.4h6.6" stroke="#fff" stroke-width="2" stroke-linecap="round"/></svg>
<svg class="b" style="left:917.6px;top:25.8px" width="22.8" height="22.8" viewBox="0 0 24 24"><path d="M3 9V5a2 2 0 0 1 2-2h4M15 21h4a2 2 0 0 0 2-2v-4M14 3h7v7M21 3l-6.6 6.6M10 21H3v-7M3 21l6.6-6.6" fill="none" stroke="#fff" stroke-width="2.1" stroke-linecap="round" stroke-linejoin="round"/></svg>
<!-- window controls (seen through toolbar) -->
<svg class="b" style="left:849px;top:8.7px" width="16.6" height="16.6" viewBox="0 0 16 16"><g fill="none" stroke="#4f555d" stroke-width="1"><circle cx="8" cy="8" r="1.9"/><path d="M6.9 2.2h2.2l.4 1.5 1.1.6 1.5-.5 1.1 1.9-1.1 1.1v1.3l1.1 1.1-1.1 1.9-1.5-.5-1.1.6-.4 1.5H6.900l-.4-1.500-1.100-.600-1.500.5-1.100-1.900 1.100-1.100V6.800L2.800 5.700l1.100-1.900 1.500.5 1.100-.6z" stroke-linejoin="round"/></g></svg>
<div class="b" style="left:891.3px;top:16.8px;width:7.8px;height:1px;background:#555b63"></div>
<svg class="b" style="left:919.1px;top:10.6px" width="13.2" height="13.2" viewBox="0 0 15 15"><g fill="none" stroke="#555b63" stroke-width="1.15"><rect x="3.4" y="5" width="6.6" height="6.4" rx="1.3"/><path d="M5.2 4.8V4.400a1.3 1.300 0 0 1 1.300-1.300h4.200a1.300 1.300 0 0 1 1.300 1.300v4.200a1.300 1.300 0 0 1-1.300 1.300h-.5"/></g></svg>
<!-- watermark -->
<div class="b" style="left:756.6px;top:488px;font-family:'Liberation Sans',sans-serif;font-size:19px;letter-spacing:-0.475px;line-height:22px;color:#c9cbcd;white-space:pre;text-shadow:0.6px 0.8px 1px rgba(0,0,0,.55)">CSDN @xiaoyaoyou.xyz</div>
</div></div>
</body></html>
